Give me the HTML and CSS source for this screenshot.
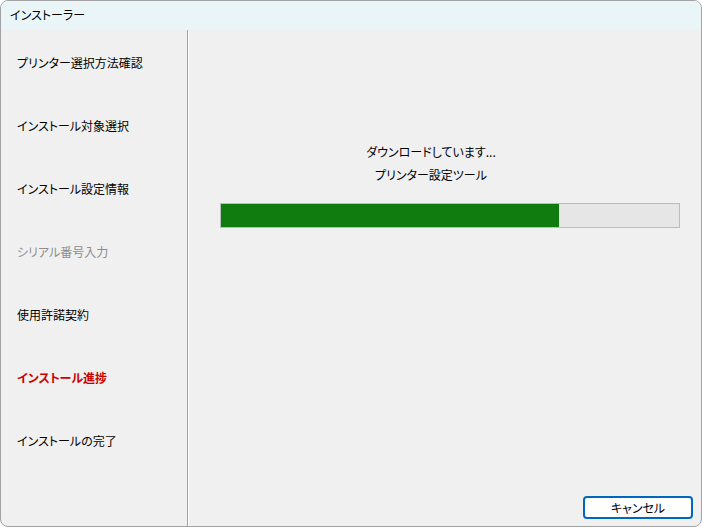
FILE: index.html
```html
<!DOCTYPE html>
<html lang="ja">
<head>
<meta charset="utf-8">
<title>インストーラー</title>
<link rel="stylesheet" href="styles.css">
</head>
<body>
<div class="window">
  <div class="titlebar">インストーラー</div>
  <div class="content">
    <ul class="steps">
      <li class="step">プリンター選択方法確認</li>
      <li class="step">インストール対象選択</li>
      <li class="step">インストール設定情報</li>
      <li class="step disabled">シリアル番号入力</li>
      <li class="step">使用許諾契約</li>
      <li class="step current">インストール進捗</li>
      <li class="step">インストールの完了</li>
    </ul>
    <div class="main">
      <div class="status">
        <p class="line first">ダウンロードしています...</p>
        <p class="line">プリンター設定ツール</p>
      </div>
      <div class="progress"><div class="fill" style="width: 73.8%"></div></div>
      <div class="actions">
        <button class="btn">キャンセル</button>
      </div>
    </div>
  </div>
</div>
</body>
</html>
```
FILE: styles.css
```css
* { box-sizing: border-box; }
html, body { margin: 0; padding: 0; }
body {
  width: 702px;
  height: 527px;
  background: #ffffff;
  font-family: "Noto Sans CJK JP", "Noto Sans", sans-serif;
  font-size: 12px;
  font-feature-settings: "palt";
  color: #000;
}
.window {
  width: 702px;
  height: 527px;
  border: 1px solid #a3a3a3;
  border-radius: 8px;
  overflow: hidden;
  display: flex;
  flex-direction: column;
  background: #f0f0f0;
}
.titlebar {
  height: 29px;
  background: #eaf5f7;
  padding-left: 9px;
  line-height: 28px;
  font-size: 12px;
}
.content {
  flex: 1;
  display: flex;
}
.steps {
  list-style: none;
  margin: 0;
  padding: 0;
  width: 187px;
  border-right: 1px solid #a0a0a0;
  box-shadow: 1px 0 0 #ffffff;
}
.step {
  height: 63px;
  display: flex;
  align-items: center;
  padding-left: 16px;
  padding-top: 1px;
}
.step.disabled { color: #8d8d8d; }
.step.current { color: #cc0000; font-weight: 700; }
.main {
  flex: 1;
  display: flex;
  flex-direction: column;
  padding-left: 32px;
  padding-right: 21px;
}
.status {
  padding-top: 114px;
  padding-right: 38px;
  text-align: center;
}
.line {
  margin: 0;
  line-height: 16px;
}
.line.first { margin-bottom: 7px; }
.progress {
  margin-top: 20px;
  width: 460px;
  height: 25px;
  border: 1px solid #bcbcbc;
  background: #e6e6e6;
}
.fill {
  height: 100%;
  background: #107c10;
}
.actions {
  margin-top: auto;
  display: flex;
  justify-content: flex-end;
  margin-right: -13px;
  padding-bottom: 7px;
}
.btn {
  width: 110px;
  height: 23px;
  border: 2px solid #0067c0;
  border-radius: 4px;
  background: #ffffff;
  font-family: inherit;
  font-size: 12px;
  font-feature-settings: "palt";
  color: #000;
  padding: 0;
  line-height: 18px;
}
```
